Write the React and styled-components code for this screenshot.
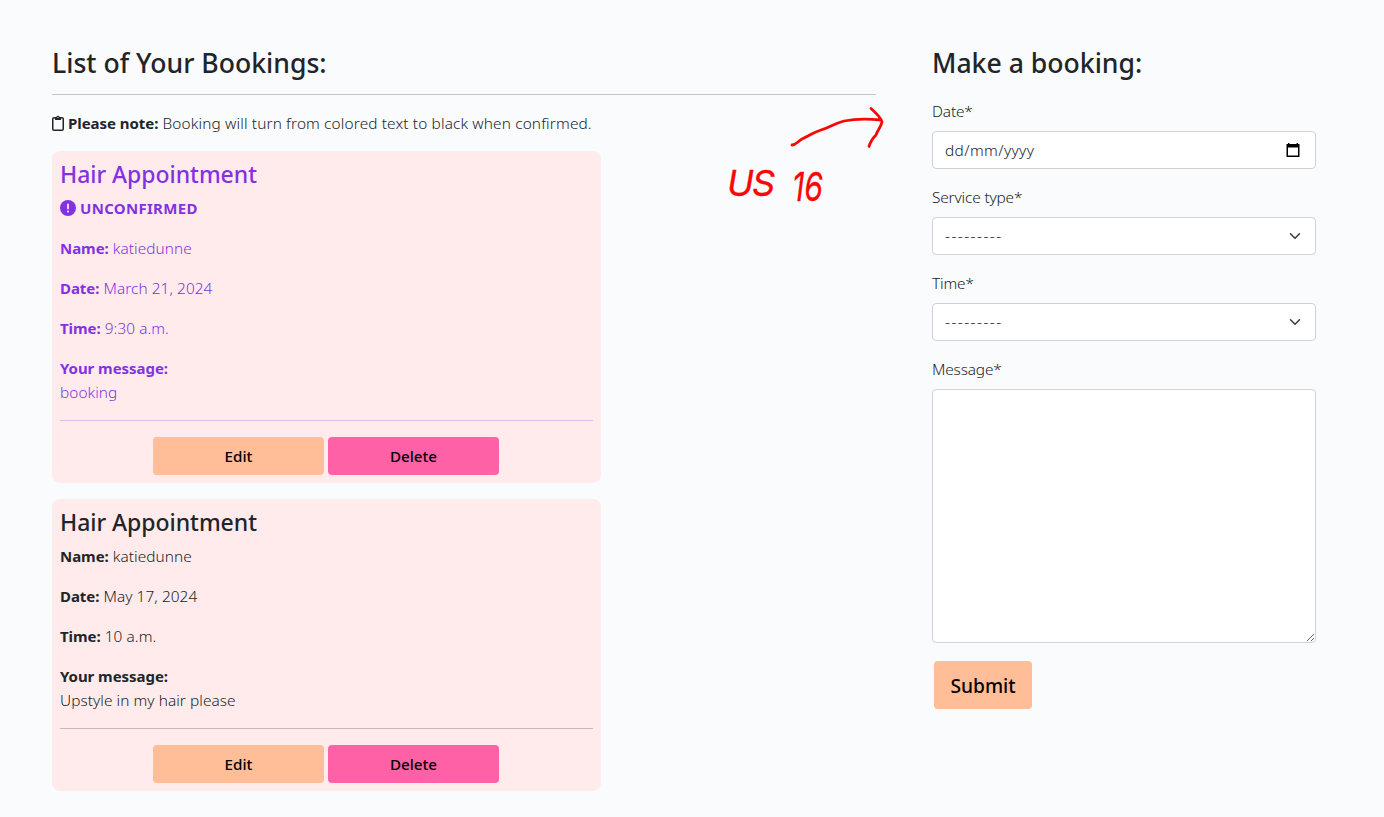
import React from "react";
import styled, { createGlobalStyle } from "styled-components";

const GlobalStyle = createGlobalStyle`
  *, *::before, *::after { box-sizing: border-box; }
  body {
    margin: 0;
    height: 817px;
    overflow: hidden;
    background: #f9fbfd;
    color: #212529;
    font: 300 15.4px/24px "Noto Sans", "Open Sans", sans-serif;
    letter-spacing: 0.06px;
  }
`;

const Page = styled.main`
  position: relative;
  display: flex;
  align-items: flex-start;
  gap: 56px;
  width: 1384px;
  height: 817px;
  padding: 47.4px 68px 0 52px;
`;

const Bookings = styled.section`
  width: 824px;
`;

const BookingForm = styled.form`
  flex: 1;
  min-width: 0;
`;

const Title = styled.h2`
  margin: 0 0 -3px;
  font-size: 26.6px;
  font-weight: 500;
  line-height: 33.6px;
  letter-spacing: 0;
`;

const Rule = styled.hr`
  height: 1px;
  margin: ${(p) => (p.$inCard ? 15 : 16)}px 0 16px;
  border: 0;
  color: inherit;
  background: currentColor;
  opacity: 0.25;
`;

const Strong = styled.strong`
  font-size: 15px;
  line-height: 1;
  font-weight: 700;
  letter-spacing: ${(p) => (p.$wide ? 0.3 : -0.05)}px;
`;

const Note = styled.p`
  margin: 0 0 15px;
  padding-top: 1px;
  letter-spacing: 0.135px;
`;

const ClipboardIcon = styled.svg`
  display: inline-block;
  width: 12px;
  height: 16px;
  margin: 0 4.5px 0 -0.5px;
  vertical-align: -2px;
`;

const AlertIcon = styled.svg`
  display: inline-block;
  width: 16px;
  height: 16px;
  margin: 0 4.5px 0 -0.5px;
  vertical-align: -2px;
`;

const Card = styled.article`
  width: 549px;
  margin-bottom: 16px;
  padding: 8px;
  border-radius: 8px;
  background: #ffebeb;
  color: ${(p) => (p.$pending ? "#8332e2" : "#212529")};
`;

const CardTitle = styled.h3`
  margin: 0 0 7px;
  padding-top: 1px;
  font-size: 23px;
  font-weight: 500;
  line-height: 28.8px;
  letter-spacing: -0.04px;
`;

const Detail = styled.p`
  margin: 0 0 15px;
  padding-top: 1px;
`;

const Actions = styled.div`
  display: flex;
  justify-content: center;
  gap: 4px;
  padding-right: 1px;
`;

const Button = styled.button`
  width: 171px;
  height: 38px;
  padding: 0;
  border: 0;
  border-radius: 4px;
  background: ${(p) => (p.$danger ? "#ff61a6" : "#ffbd98")};
  color: #000;
  font: 500 15.2px/24px "Noto Sans", "Open Sans", sans-serif;
  letter-spacing: 0;
`;

const SubmitButton = styled(Button)`
  width: 98px;
  height: 48px;
  margin: 2px;
  padding-top: 2px;
  font-size: 19.2px;
  line-height: 30px;
`;

const Field = styled.div`
  display: flex;
  flex-direction: column;
  gap: 7px;
  margin-bottom: 16px;
`;

const Fields = styled.div`
  padding-top: 21px;
`;

const Label = styled.label`
  padding-top: 1px;
  letter-spacing: -0.15px;
`;

const Control = styled.div`
  display: flex;
  align-items: center;
  justify-content: space-between;
  height: 38px;
  padding: 0 ${(p) => (p.$select ? 12 : 15)}px 0 12px;
  border: 1px solid #ced4da;
  border-radius: 4px;
  background: #fff;
`;

const DateText = styled.span`
  padding-top: 2px;
  letter-spacing: 0.38px;
`;

const SelectText = styled.span`
  letter-spacing: 1.45px;
`;

const Chevron = styled.svg`
  width: 16px;
  height: 12px;
`;

const Calendar = styled.svg`
  width: 14px;
  height: 16px;
`;

const Message = styled.textarea`
  display: block;
  width: 100%;
  height: 254px;
  padding: 6px 12px;
  border: 1px solid #ced4da;
  border-radius: 4px;
  background: #fff;
  resize: vertical;
`;

const Annotation = styled.svg`
  position: absolute;
  left: 720px;
  top: 100px;
  width: 170px;
  height: 115px;
  pointer-events: none;
`;

const Scrawl = styled.text`
  fill: #f90707;
  stroke: #f90707;
  stroke-width: 0.3px;
  font-family: Inter, "Liberation Sans", sans-serif;
  font-weight: 400;
  font-style: italic;
  letter-spacing: 0;
`;

const bookings = [
  {
    pending: true,
    date: "March 21, 2024",
    time: "9:30 a.m.",
    message: "booking",
  },
  {
    pending: false,
    date: "May 17, 2024",
    time: "10 a.m.",
    message: "Upstyle in my hair please",
  },
];

function Booking({ pending, date, time, message }) {
  return (
    <Card $pending={pending}>
      <CardTitle>Hair Appointment</CardTitle>
      {pending && (
        <Detail>
          <AlertIcon viewBox="0 0 16 16" aria-hidden="true">
            <circle cx="8" cy="8" r="8" fill="currentColor" />
            <path d="M8 4.5V8.4" stroke="#ffebeb" strokeWidth="1.8" strokeLinecap="round" />
            <circle cx="8" cy="11.4" r="1" fill="#ffebeb" />
          </AlertIcon>
          <Strong $wide>UNCONFIRMED</Strong>
        </Detail>
      )}
      <Detail><Strong>Name:</Strong> katiedunne</Detail>
      <Detail><Strong>Date:</Strong> {date}</Detail>
      <Detail><Strong>Time:</Strong> {time}</Detail>
      <Detail><Strong>Your message:</Strong><br />{message}</Detail>
      <Rule $inCard />
      <Actions>
        <Button type="button">Edit</Button>
        <Button type="button" $danger>Delete</Button>
      </Actions>
    </Card>
  );
}

function SelectField({ label }) {
  return (
    <Field>
      <Label>{label}</Label>
      <Control $select>
        <SelectText>---------</SelectText>
        <Chevron viewBox="0 0 16 16" aria-hidden="true">
          <path d="m2 5 6 6 6-6" fill="none" stroke="#343a40" strokeWidth="2" strokeLinecap="round" strokeLinejoin="round" />
        </Chevron>
      </Control>
    </Field>
  );
}

export default function App() {
  return (
    <Page>
      <GlobalStyle />
      <Bookings>
        <Title>List of Your Bookings:</Title>
        <Rule />
        <Note>
          <ClipboardIcon viewBox="0 0 12 16" aria-hidden="true">
            <rect x="0.75" y="2.75" width="10.5" height="12.5" rx="1.3" fill="none" stroke="currentColor" strokeWidth="1.5" />
            <path d="M3 2h1.3a1.8 1.8 0 0 1 3.4 0H9v3H3z" fill="currentColor" />
            <circle cx="6" cy="2.3" r="0.6" fill="#f9fbfd" />
          </ClipboardIcon>
          <Strong>Please note:</Strong> Booking will turn from colored text to black when confirmed.
        </Note>
        {bookings.map((b) => <Booking key={b.date} {...b} />)}
      </Bookings>

      <BookingForm>
        <Title>Make a booking:</Title>
        <Fields>
          <Field>
            <Label>Date*</Label>
            <Control>
              <DateText>dd/mm/yyyy</DateText>
              <Calendar viewBox="0 0 14 16" aria-hidden="true">
                <path d="M0.500 2h13v13h-13zM2 5.5v8h10v-8z" fill="#000" fillRule="evenodd" />
                <path d="M2.700 1v2M11.3 1v2" stroke="#000" strokeWidth="1.4" />
              </Calendar>
            </Control>
          </Field>
          <SelectField label="Service type*" />
          <SelectField label="Time*" />
          <Field>
            <Label>Message*</Label>
            <Message />
          </Field>
        </Fields>
        <SubmitButton type="button">Submit</SubmitButton>
      </BookingForm>

      <Annotation viewBox="0 0 170 115">
        <path
          d="M72 45C76 45 77 42 82 39C91 35 92 33 101 30C111 27 113 24 124 21C134 19 146 18.5 161 20M151 8.500C155 12 161 18 162 22C161 27 157 31 156 35C152 39 150 43 149 46.500"
          fill="none"
          stroke="#f90707"
          strokeWidth="2.8"
          strokeLinecap="round"
          strokeLinejoin="round"
        />
        <Scrawl fontSize="36">
          <tspan x="7" y="96">U</tspan>
          <tspan x="32" y="96">S</tspan>
        </Scrawl>
        <Scrawl fontSize="40" textLength="31" lengthAdjust="spacingAndGlyphs" x="72" y="101">16</Scrawl>
      </Annotation>
    </Page>
  );
}
